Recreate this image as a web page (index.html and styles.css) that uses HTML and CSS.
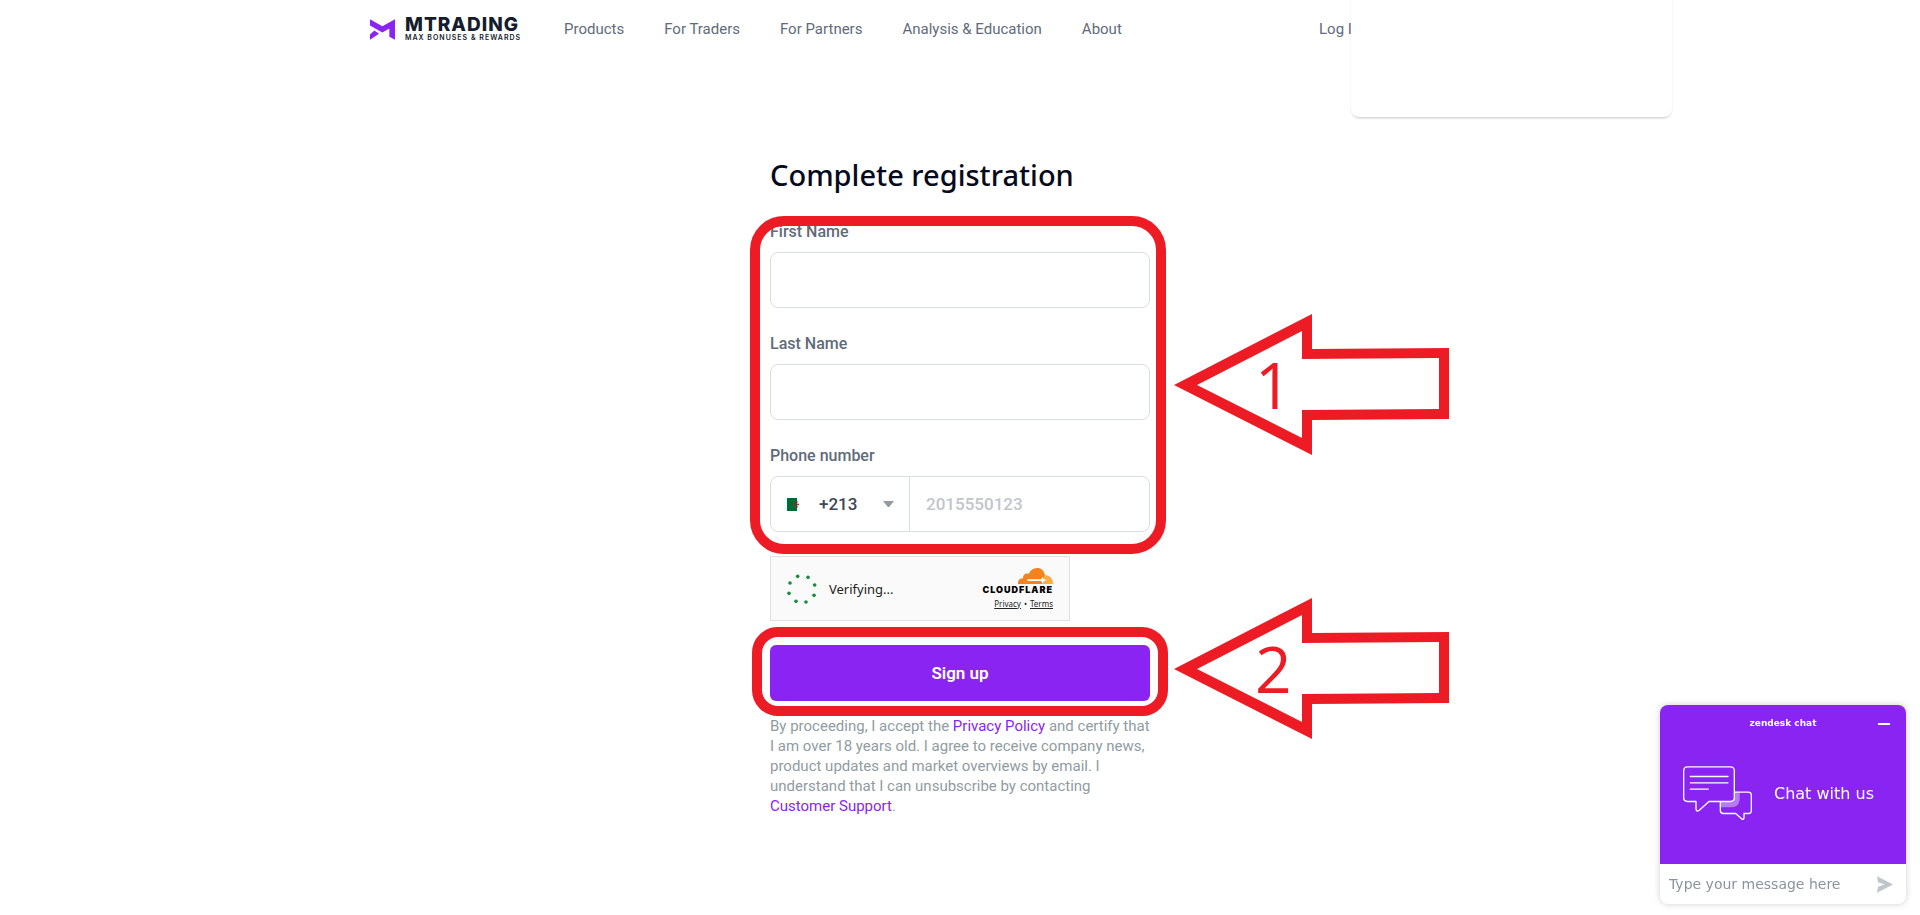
FILE: index.html
```html
<!DOCTYPE html>
<html lang="en">

<head>
  <meta charset="UTF-8" />
  <meta name="viewport" content="width=device-width, initial-scale=1.0" />
  <title>MTrading - Complete registration</title>
  <link rel="stylesheet" href="styles.css">
</head>

<body>
  <header class="header">
    <a class="logo" href="#" aria-label="MTrading">
      <svg class="logo-mark" viewBox="0 0 75 62" aria-hidden="true">
        <path fill="#8a24f2" d="M0 0L37 21L75 0V62L58 53V28L37 40L0 19Z" />
        <path fill="#8a24f2" d="M0 62V46L13 34L27 44Z" />
      </svg>
      <span class="logo-text">
        <span class="logo-name">MTRADING</span>
        <span class="logo-slogan">MAX BONUSES &amp; REWARDS</span>
      </span>
    </a>
    <nav class="nav">
      <a href="#">Products</a>
      <a href="#">For Traders</a>
      <a href="#">For Partners</a>
      <a href="#">Analysis &amp; Education</a>
      <a href="#">About</a>
    </nav>
    <div class="account">
      <a href="#">Log In</a>
      <div class="popup"></div>
    </div>
  </header>

  <main class="registration">
    <h1>Complete registration</h1>
    <form>
      <!-- step 1: personal data -->
      <div class="step step-fields">
        <div class="field">
          <label for="first-name">First Name</label>
          <input class="box" type="text" id="first-name" />
        </div>
        <div class="field">
          <label for="last-name">Last Name</label>
          <input class="box" type="text" id="last-name" />
        </div>
        <div class="field">
          <label for="phone">Phone number</label>
          <div class="box phone">
            <div class="country">
              <svg class="flag" viewBox="0 0 12 13" aria-hidden="true">
                <path fill="#006b35" d="M0 0h10v13H0z" />
                <path fill="#fff" d="M10 0h2v13h-2z" />
                <path fill="none" stroke="#d21034" stroke-width="1" d="M11 4.200A3 3 0 1 0 11 8.800" />
                <circle cx="11" cy="6.500" r="1" fill="#d21034" />
              </svg>
              <select aria-label="Country code">
                <option>+213</option>
              </select>
              <svg class="caret" viewBox="0 0 11 6" aria-hidden="true">
                <path fill="#909ca1" d="M0 0h11L6.500 5.500Q5.500 6.500 4.500 5.500z" />
              </svg>
            </div>
            <input type="tel" id="phone" placeholder="2015550123" />
          </div>
        </div>
        <div class="frame"></div>
        <svg class="arrow" viewBox="0 0 276 144" aria-hidden="true">
          <path fill="#ed1c24" fill-rule="evenodd" d="M0 72L138 1V36L275 35V106L138 107V142ZM23 72L128 18V46L265 45V96L128 97V125Z" />
          <text x="81" y="96">1</text>
        </svg>
      </div>

      <div class="captcha">
        <svg class="spinner" viewBox="141 101 90 90" fill="#1a8a3c" aria-hidden="true">
          <circle cx="173" cy="108" r="5.500" />
          <circle cx="204" cy="111" r="5.500" />
          <circle cx="224" cy="134" r="5.500" />
          <circle cx="222" cy="165" r="5.500" />
          <circle cx="198" cy="185" r="5.500" />
          <circle cx="168" cy="183" r="5.500" />
          <circle cx="147" cy="159" r="5.500" />
          <circle cx="150" cy="128" r="5.500" />
        </svg>
        <span class="captcha-text">Verifying...</span>
        <div class="cloudflare">
          <svg class="cloud" viewBox="0 0 105 48" aria-hidden="true">
            <path fill="#f6821f" d="M0 48C-1 37 5 31 15 31C14 21 23 13 32 18C37 6 46 0 57 0C70 0 78 8 81 21L76 48Z" />
            <path fill="#fbad41" d="M76 48L82 22C94 20 105 31 105 48Z" />
            <path fill="#fff" d="M28 34H70L74 26L77 34L86 37L77 40L73 48L70 39H28Z" />
          </svg>
          <span class="cloudflare-name">CLOUDFLARE</span>
          <span class="cloudflare-links"><a href="#">Privacy</a><span>•</span><a href="#">Terms</a></span>
        </div>
      </div>

      <!-- step 2: submit -->
      <div class="step step-submit">
        <button class="submit" type="submit">Sign up</button>
        <div class="frame"></div>
        <svg class="arrow" viewBox="0 0 276 144" aria-hidden="true">
          <path fill="#ed1c24" fill-rule="evenodd" d="M0 72L138 1V36L275 35V106L138 107V142ZM23 72L128 18V46L265 45V96L128 97V125Z" />
          <text x="81" y="96">2</text>
        </svg>
      </div>

      <p class="terms">By proceeding, I accept the <a href="#">Privacy Policy</a> and certify that I am over 18 years old. I agree to receive company news, product updates and market overviews by email. I understand that I can unsubscribe by contacting <a href="#">Customer Support</a>.</p>
    </form>
  </main>

  <aside class="chat">
    <div class="chat-top">
      <div class="chat-bar">
        <span>zendesk chat</span>
        <button class="minimize" type="button" aria-label="Minimize"></button>
      </div>
      <div class="chat-body">
        <svg class="bubbles" viewBox="0 0 210 164" fill="none" stroke="#fff" stroke-width="4" stroke-linejoin="round" aria-hidden="true">
          <path fill="#b77bf7" stroke="none" d="M112 106H153V78H170V100Q168 122 148 123H112Z" />
          <path d="M14 2H142Q154 2 154 14V94Q154 106 142 106H78L48 133Q40 138 39 128V106H14Q2 106 2 94V14Q2 2 14 2Z" />
          <path d="M154 78H196Q205 78 205 87V132Q205 142 196 142H183V155Q182 162 176 158L158 142H121Q112 142 112 133V106" />
          <path stroke-linecap="round" d="M22 31H135M22 50H135M22 69H76" />
        </svg>
        <span>Chat with us</span>
      </div>
    </div>
    <div class="chat-input">
      <input type="text" placeholder="Type your message here" aria-label="Message" />
      <button type="button" aria-label="Send">
        <svg viewBox="0 0 48 50" aria-hidden="true">
          <path fill="#bfc5ca" d="M0 0L48 25L0 50L3 32L23 25L3 18Z" />
        </svg>
      </button>
    </div>
  </aside>
</body>

</html>
```

FILE: styles.css
```css
* {
  margin: 0;
  padding: 0;
  box-sizing: border-box;
}

body {
  position: relative;
  min-height: 100vh;
  font-family: Roboto, "Liberation Sans", sans-serif;
  color: #5f6b7a;
  background: #fff;
}

a {
  color: #8a24f2;
  text-decoration: none;
}

input,
select,
button {
  border: 0;
  outline: 0;
  background: none;
  font-family: inherit;
}

/* header */
.header {
  display: flex;
  align-items: center;
  max-width: 1180px;
  height: 58px;
  margin: 0 auto;
  font-size: 15px;
}

.header a {
  color: #5f6b7a;
}

.logo {
  display: flex;
  align-items: center;
  gap: 10px;
  width: 194px;
}

.logo-mark {
  width: 25px;
  height: 21px;
}

.logo-text {
  display: flex;
  flex-direction: column;
  font-family: Inter, "Liberation Sans", sans-serif;
  color: #151c2b;
}

.logo-name {
  font-size: 19px;
  line-height: 16px;
  font-weight: 800;
  letter-spacing: 1px;
}

.logo-slogan {
  font-size: 7px;
  line-height: 9px;
  font-weight: 600;
  letter-spacing: 1px;
}

.nav {
  display: flex;
  gap: 40px;
}

.account {
  position: relative;
  width: 231px;
  margin-left: auto;
}

.popup {
  position: absolute;
  top: -20px;
  left: 32px;
  width: 321px;
  height: 117px;
  border-radius: 0 0 8px 8px;
  background: #fff;
  box-shadow: 0 3px 3px -2px rgba(0, 0, 0, 0.2), 0 0 2px rgba(0, 0, 0, 0.1);
}

/* form */
.registration {
  max-width: 380px;
  margin: 0 auto;
  padding-top: 97px;
}

.registration h1 {
  margin-bottom: 25px;
  font-family: "Noto Sans", sans-serif;
  font-size: 29px;
  line-height: 40px;
  font-weight: 500;
  color: #050a1c;
}

.step {
  position: relative;
}

.step-fields {
  display: grid;
  grid-template-columns: minmax(0, 1fr);
  gap: 24px;
  margin-bottom: 24px;
}

.field label {
  display: block;
  height: 32px;
  font-size: 16px;
  line-height: 24px;
  font-weight: 500;
}

.box {
  display: block;
  width: 100%;
  height: 56px;
  border: 1px solid #d8dee2;
  border-radius: 8px;
}

.box.phone {
  display: flex;
}

.country {
  display: flex;
  align-items: center;
  width: 139px;
  padding: 0 15px 0 16px;
  border-right: 1px solid #d8dee2;
}

.flag {
  width: 12px;
  height: 13px;
}

.country select {
  flex: 1;
  margin-left: 20px;
  appearance: none;
  font-size: 17px;
  font-weight: 500;
  color: #3d4654;
}

.caret {
  width: 11px;
  height: 6px;
}

.phone input {
  flex: 1;
  min-width: 0;
  padding: 0 16px;
  font-size: 17px;
  font-weight: 500;
}

.phone input::placeholder {
  color: #c0c6cb;
}

/* red marks */
.frame {
  position: absolute;
  border: 10px solid #ed1c24;
  pointer-events: none;
}

.step-fields .frame {
  inset: -4px -16px -22px -20px;
  border-radius: 34px;
}

.step-submit .frame {
  inset: -18px -18px -15px -18px;
  border-radius: 26px;
}

.arrow {
  position: absolute;
  left: 404px;
  width: 276px;
  height: 144px;
}

.step-fields .arrow {
  top: 93px;
}

.step-submit .arrow {
  top: -48px;
}

.arrow text {
  font-family: "Open Sans", sans-serif;
  font-size: 64px;
  fill: #ed1c24;
}

/* captcha */
.captcha {
  display: flex;
  align-items: center;
  width: 300px;
  height: 65px;
  margin-bottom: 24px;
  padding: 0 16px;
  border: 1px solid #e0e0e0;
  background: #fafafa;
  font-family: "Noto Sans", sans-serif;
}

.spinner {
  width: 30px;
  height: 30px;
  margin-right: 12px;
}

.captcha-text {
  font-size: 13px;
  color: #232323;
}

.cloudflare {
  display: flex;
  flex-direction: column;
  align-items: flex-end;
  margin-left: auto;
  color: #232323;
}

.cloud {
  width: 35px;
  height: 16px;
}

.cloudflare-name {
  font-family: Inter, sans-serif;
  font-size: 9px;
  line-height: 12px;
  font-weight: 900;
  letter-spacing: 1px;
  color: #000;
}

.cloudflare-links {
  display: flex;
  gap: 3px;
  margin-top: 2px;
  font-size: 8px;
  line-height: 12px;
}

.cloudflare-links a {
  color: #232323;
  text-decoration: underline;
}

.submit {
  display: block;
  width: 100%;
  height: 56px;
  border-radius: 6px;
  background: #8a24f2;
  color: #fff;
  font-size: 17px;
  font-weight: 600;
}

.terms {
  margin-top: 15px;
  font-size: 15px;
  line-height: 20px;
  color: #909ca1;
}

/* chat widget */
.chat {
  position: fixed;
  right: 14px;
  bottom: 11px;
  width: 246px;
  border-radius: 8px;
  overflow: hidden;
  background: #fff;
  box-shadow: 0 0 6px rgba(0, 0, 0, 0.2);
  font-family: "DejaVu Sans", sans-serif;
}

.chat-top {
  height: 159px;
  background: #8a24f2;
  color: #fff;
}

.chat-bar {
  position: relative;
  height: 36px;
  font-size: 9px;
  line-height: 36px;
  font-weight: 700;
  text-align: center;
}

.minimize {
  position: absolute;
  top: 18px;
  right: 16px;
  width: 12px;
  height: 2px;
  background: #fff;
}

.chat-body {
  display: flex;
  align-items: center;
  gap: 21px;
  height: 105px;
  padding-left: 23px;
  font-size: 16px;
}

.bubbles {
  width: 70px;
  height: 55px;
}

.chat-input {
  display: flex;
  align-items: center;
  height: 40px;
  padding: 0 13px 0 9px;
}

.chat-input input {
  flex: 1;
  min-width: 0;
  font-size: 14px;
}

.chat-input input::placeholder {
  color: #8a949e;
}

.chat-input svg {
  display: block;
  width: 16px;
  height: 17px;
}
```
